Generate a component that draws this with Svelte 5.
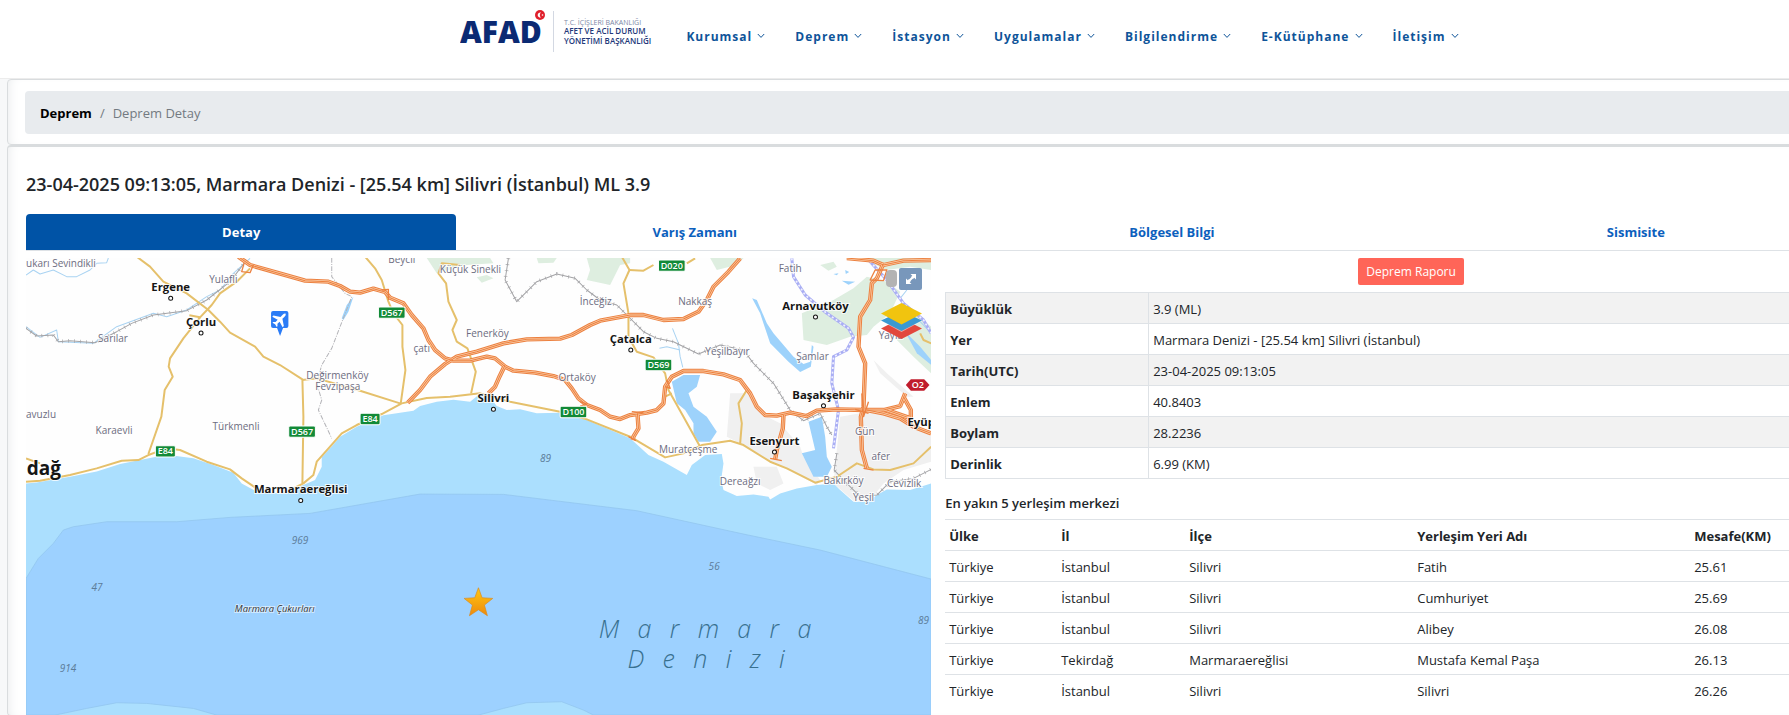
<script lang="ts">
  const menu = [
    'Kurumsal',
    'Deprem',
    'İstasyon',
    'Uygulamalar',
    'Bilgilendirme',
    'E-Kütüphane',
    'İletişim',
  ];

  const tabs = ['Detay', 'Varış Zamanı', 'Bölgesel Bilgi', 'Sismisite'];
  let activeTab = $state('Detay');

  const details = [
    ['Büyüklük', '3.9 (ML)'],
    ['Yer', 'Marmara Denizi - [25.54 km] Silivri (İstanbul)'],
    ['Tarih(UTC)', '23-04-2025 09:13:05'],
    ['Enlem', '40.8403'],
    ['Boylam', '28.2236'],
    ['Derinlik', '6.99 (KM)'],
  ];

  const columns = ['Ülke', 'İl', 'İlçe', 'Yerleşim Yeri Adı', 'Mesafe(KM)'];
  const places = [
    ['Türkiye', 'İstanbul', 'Silivri', 'Fatih', '25.61'],
    ['Türkiye', 'İstanbul', 'Silivri', 'Cumhuriyet', '25.69'],
    ['Türkiye', 'İstanbul', 'Silivri', 'Alibey', '26.08'],
    ['Türkiye', 'Tekirdağ', 'Marmaraereğlisi', 'Mustafa Kemal Paşa', '26.13'],
    ['Türkiye', 'İstanbul', 'Silivri', 'Silivri', '26.26'],
  ];

  // Map data: three map units to one pixel
  const motorways = [
    'M655 20L690 45L770 68L855 92L925 95L960 108L990 125L1020 128L1060 116L1095 126L1110 143L1150 160L1175 195L1210 235L1225 270L1245 300L1275 325L1300 332L1350 332L1400 320L1425 325L1455 350L1480 362L1545 368L1600 378L1635 390L1655 415L1675 445L1700 465L1740 480L1770 500L1800 507L1830 495L1880 488L1910 480L1930 460L1935 410L1955 380L1990 363L2050 363L2110 373L2160 390L2190 430L2210 470L2235 495L2270 497L2310 488L2360 498L2390 482L2450 478L2530 480L2590 480L2640 468L2655 430',
    'M1163 458L1200 420L1230 380L1275 342L1310 320L1370 305L1450 280L1520 268L1620 266L1655 255L1710 225L1740 212L1830 195L1870 195L1930 210L1990 207L2035 185L2060 150L2080 110L2125 65L2160 25',
    'M1455 345L1438 380L1425 410L1405 430',
    'M1852 490L1855 535L1840 560L1838 570',
    'M2290 495L2288 535L2270 600L2265 628',
    'M2480 24L2560 32L2590 45L2650 32L2733 30',
    'M2590 40L2570 85L2555 100L2550 150L2520 200L2515 290L2535 340L2530 470L2522 500L2525 600L2540 655',
    'M2540 480L2590 490L2640 505L2680 530L2733 550',
    'M2650 440L2672 480L2672 505L2600 480',
  ];
  const roads = [
    'M350 20L390 50L430 95L500 130L565 180L600 215L630 248L705 290L730 320L780 345L847 388L850 500L847 700',
    'M690 55L650 95L600 130L575 165L540 202L508 196',
    'M540 202L490 265L450 325L446 350L458 380L434 420L424 500L385 612',
    'M18 695L60 692L150 675L230 655L305 632L355 630L385 615L440 595L480 600L560 635L630 658L665 685L705 712',
    'M18 625L60 640',
    'M820 715L850 700L880 675L890 635L930 590L965 550L1010 525L1085 492L1145 460L1220 444L1290 440L1380 430L1470 455L1620 485L1700 508L1830 560L1935 622L1990 610L2045 585L2130 572L2170 585L2250 635L2300 655L2385 698L2450 680L2510 640L2560 658L2610 660L2680 640L2733 590',
    'M847 390L890 385L1020 422L1140 460',
    'M1035 20L1065 55L1085 90L1105 155L1120 190L1147 225L1147 290L1156 360L1142 460',
    'M1320 45L1265 40L1255 70L1278 100L1285 155L1310 210L1297 240L1310 275L1342 295L1367 365L1353 430',
    'M1805 20L1828 60L1810 100L1825 190L1825 260L1850 305L1900 322L1935 370L1945 420L1990 500L2040 590',
    'M1828 60L1870 62L1900 45M2000 40L2025 25',
    'M2180 420L2155 460L2165 520L2160 580',
    'M1935 440L1955 430',
    'M2700 250L2710 270L2733 280',
  ];
  const railways = [
    'M18 235L50 258L100 255L115 275L150 272L225 278L290 245L335 220L400 195L500 182L560 150L630 95L680 30',
    'M1465 25L1455 90L1490 155L1550 95L1610 72L1665 85L1700 120L1740 150L1790 165L1870 245L1910 265L1960 275L2035 312L2100 285L2170 300L2200 340L2260 400L2310 480L2350 512L2400 490L2420 530L2435 555',
    'M2450 610L2442 660L2480 700L2520 740L2570 735L2610 695L2680 685L2733 658',
  ];
  const tracks = [
    'M935 24L935 80L975 130L995 140L960 230L935 295L905 345L890 400L905 450L895 480L935 565',
  ];
  const subways = [
    'M2315 25L2320 80L2355 135L2420 190L2485 235L2500 262L2480 300L2440 320L2435 400L2455 480L2440 595',
    'M2540 24L2600 90L2650 160L2710 210L2733 250',
  ];
  const greens = [
    'M1220 24L1410 24L1420 40L1340 45L1250 70Z',
    'M1370 82L1400 75L1420 85L1385 98Z',
    'M1700 24L1830 24L1830 40L1800 45L1770 105L1700 90L1710 60Z',
    'M1550 24L1610 24L1600 38L1555 40Z',
    'M2070 24L2170 24L2150 45L2090 60Z',
    'M2350 270L2345 190L2440 150L2500 115L2540 80L2600 95L2640 125L2610 190L2560 230L2540 255L2490 260L2420 285Z',
    'M2640 180L2690 195L2733 230L2733 370L2680 320L2630 270Z',
    'M2520 24L2733 24L2733 60L2670 50L2600 60Z',
    'M2400 45L2440 35L2450 50L2425 62Z',
  ];
  const urban = [
    'M2130 430L2190 430L2230 495L2280 520L2340 590L2350 620L2400 690L2390 705L2290 650L2260 640L2180 590L2120 560Z',
    'M2200 650L2270 650L2290 700L2250 720L2210 700Z',
    'M2560 330L2600 370L2680 440L2660 440L2580 370Z',
    'M2460 500L2520 490L2600 485L2680 520L2733 560L2733 635L2650 660L2590 700L2550 750L2500 752L2440 700L2450 600Z',
  ];
  const lakes = [
    'M2196 145L2210 150L2240 220L2260 250L2290 285L2320 320L2350 342L2370 335L2375 285L2380 290L2372 350L2340 366L2305 335L2250 280L2220 190Z',
    'M1955 395L1990 375L2040 375L2030 410L2005 430L2020 470L2060 500L2090 545L2070 575L2035 575L2020 550L2020 520L1995 480L1970 460Z',
    'M2365 515L2405 500L2415 560L2420 620L2435 650L2420 680L2380 680L2345 610L2385 600Z',
    'M965 205L980 165L1000 140L985 185L970 210Z',
    'M2440 72L2455 70L2450 76ZM2475 60L2487 66L2477 72ZM2465 92L2505 95L2485 104Z',
    'M2655 245L2700 290L2733 330L2733 345L2690 310Z',
  ];
  const streams = [
    'M18 75L40 60L60 72L100 60L140 80L170 80L210 60L230 40L260 38L265 24',
    'M18 230L60 262L110 240L115 275L220 280L290 230L400 190L440 200L500 180L560 140L600 120L640 70L690 25',
    'M1957 235L1975 280L1980 320L1988 352M1918 295L1940 290L1980 300',
    'M2640 145L2660 120M2700 215L2733 250',
  ];

  const villages = [
    [18, 52, 'ukarı Sevindikli', 'start'],
    [610, 100, 'Yulaflı', 'middle'],
    [279, 277, 'Sarılar', 'middle'],
    [18, 505, 'avuzlu', 'start'],
    [282, 552, 'Karaevli', 'middle'],
    [648, 540, 'Türkmenli', 'middle'],
    [952, 386, 'Değirmenköy', 'middle'],
    [953, 420, 'Fevzipaşa', 'middle'],
    [1145, 39, 'Beycil', 'middle'],
    [1351, 70, 'Küçük Sinekli', 'middle'],
    [1205, 306, 'çatı', 'middle'],
    [1402, 262, 'Fenerköy', 'middle'],
    [1671, 392, 'Ortaköy', 'middle'],
    [1727, 166, 'İnceğiz', 'middle'],
    [2025, 166, 'Nakkaş', 'middle'],
    [2310, 67, 'Fatih', 'middle'],
    [2122, 315, 'Yeşilbayır', 'middle'],
    [2377, 331, 'Şamlar', 'middle'],
    [2004, 610, 'Muratçeşme', 'middle'],
    [2160, 706, 'Dereağzı', 'middle'],
    [2534, 554, 'Gün', 'middle'],
    [2582, 630, 'afer', 'middle'],
    [2612, 268, 'Yayla', 'middle'],
    [2470, 702, 'Bakırköy', 'middle'],
    [2530, 752, 'Yeşil', 'middle'],
    [2652, 710, 'Cevizlik', 'middle'],
  ];
  const towns = [
    [452, 122, 'Ergene', 145],
    [543, 227, 'Çorlu', 249],
    [842, 728, 'Marmaraereğlisi', 751],
    [1420, 457, 'Silivri', 478],
    [1832, 279, 'Çatalca', 300],
    [2386, 179, 'Arnavutköy', 201],
    [2410, 446, 'Başakşehir', 467],
    [2263, 584, 'Esenyurt', 606],
  ];
  const depths = [
    [1576, 635, '89'],
    [840, 881, '969'],
    [231, 1022, '47'],
    [144, 1266, '914'],
    [2082, 960, '56'],
    [2710, 1121, '89'],
  ];
  const shields = [
    [436, 604, 'E84'],
    [846, 545, 'D567'],
    [1050, 507, 'E84'],
    [1115, 188, 'D567'],
    [1660, 486, 'D100'],
    [1955, 47, 'D020'],
    [1915, 345, 'D569'],
  ];
</script>

<div class="page">
  <header>
    <a class="logo" href="#anasayfa" aria-label="AFAD">
      <svg width="192" height="48" viewBox="0 0 192 48">
        <text class="mark" x="0" y="37">AFAD</text>
        <circle cx="80" cy="9" r="5" fill="#e0202c" />
        <path d="M81 6.500A2.600 2.600 0 1 0 81 11.500A3.200 3.200 0 0 1 81 6.500Z" fill="#fff" />
        <circle cx="82.500" cy="9" r="0.800" fill="#fff" />
        <path d="M93.500 5V46" stroke="#d3d8e2" />
        <text class="ministry" x="104" y="19">T.C. İÇİŞLERİ BAKANLIĞI</text>
        <text class="agency" x="104" y="28">AFET VE ACİL DURUM</text>
        <text class="agency" x="104" y="38">YÖNETİMİ BAŞKANLIĞI</text>
      </svg>
    </a>
    <nav>
      {#each menu as item}
        <a href="#menu">
          {item}
          <svg width="8" height="6" viewBox="0 0 8 6">
            <path d="M0.800 1L4 4.400L7.200 1" fill="none" stroke="currentColor" />
          </svg>
        </a>
      {/each}
    </nav>
  </header>

  <main>
    <section class="card crumbs">
      <ol>
        <li><a href="#deprem">Deprem</a></li>
        <li>Deprem Detay</li>
      </ol>
    </section>

    <section class="card event">
      <h1>23-04-2025 09:13:05, Marmara Denizi - [25.54 km] Silivri (İstanbul) ML 3.9</h1>

      <div class="tabs" role="tablist">
        {#each tabs as tab}
          <button
            role="tab"
            aria-selected={activeTab === tab}
            class:active={activeTab === tab}
            onclick={() => (activeTab = tab)}>{tab}</button
          >
        {/each}
      </div>

      <div class="content">
        <div class="map">
          <svg class="tiles" viewBox="18 24 2715 1371">
            <defs>
              <linearGradient id="gold" x1="0" y1="0" x2="0" y2="1">
                <stop offset="0" stop-color="#ffc812" />
                <stop offset="1" stop-color="#ee8a0c" />
              </linearGradient>
            </defs>
            <rect x="18" y="24" width="2715" height="1371" fill="#fefefe" />
            {#each greens as d}<path {d} fill="#deeee0" />{/each}
            {#each urban as d}<path {d} fill="#f0f0f0" />{/each}
            <path
              class="shallow"
              d="M18 700L50 697L150 680L230 664L300 642L390 624L440 614L520 625L580 645L640 668L665 700L705 722L780 730L800 728L850 705L885 690L905 650L905 622L930 595L960 560L1010 530L1090 496L1180 482L1200 468L1250 455L1300 449L1350 455L1375 435L1410 442L1430 468L1460 480L1500 478L1550 490L1620 488L1700 510L1830 565L1885 615L1930 635L2000 675L2015 645L2055 615L2105 612L2110 640L2103 690L2110 720L2150 738L2200 733L2245 740L2250 748L2280 730L2330 715L2390 705L2440 700L2460 720L2500 755L2545 755L2570 735L2600 718L2670 720L2733 700V1395H18Z"
            />
            <path
              class="deep"
              d="M18 985L55 925L100 880L130 840L160 830L260 815L470 815L630 802L870 790L1200 732L1450 733L1850 782L2170 852L2400 900L2733 987V1395H1720L1690 1380L1625 1355L1520 1358L1450 1375L1375 1395H590L520 1375L380 1360L290 1358L200 1375L105 1395H18Z"
            />
            {#each lakes as d}<path {d} fill="#9dd2fb" />{/each}
            {#each streams as d}<path {d} class="stream" />{/each}
            {#each tracks as d}<path {d} class="track" />{/each}
            {#each railways as d}
              <path {d} class="rail" />
              <path {d} class="sleepers" />
            {/each}
            {#each subways as d}
              <path {d} class="subway" />
              <path {d} class="dashes" />
            {/each}
            {#each roads as d}<path {d} class="road" />{/each}
            {#each motorways as d}<path {d} class="motorway" />{/each}
            {#each motorways as d}<path {d} class="lane" />{/each}
            {#each motorways as d}<path {d} class="divider" />{/each}
            <path
              class="ramp"
              d="M672 40L665 65L690 68L700 45M1085 120L1105 118L1105 150M1680 455L1700 462L1680 468M1835 485L1870 488M1825 560L1848 572M2250 625L2285 632M2550 90L2590 92L2600 60L2565 60ZM2505 478L2545 490M2530 655L2560 660M2525 430L2530 500L2545 455M1935 410L1950 415L1940 390"
            />

            {#each villages as [x, y, name, anchor]}
              <text class="village" {x} {y} text-anchor={anchor as 'start' | 'middle'}>{name}</text>
            {/each}
            <text class="city" x="20" y="674">dağ</text>
            <text class="town" x="2662" y="528">Eyüp</text>
            {#each towns as [x, y, name, dot]}
              <text class="town" {x} {y} text-anchor="middle">{name}</text>
              <circle cx={x} cy={dot} r="6" fill="#fff" stroke="#111" stroke-width="3" />
            {/each}
            {#each depths as [x, y, value]}
              <text class="depth" {x} {y} text-anchor="middle">{value}</text>
            {/each}
            <text class="trench" x="764" y="1086" text-anchor="middle">Marmara Çukurları</text>
            <text class="sea" x="1736" y="1164">Marmara</text>
            <text class="sea" x="1822" y="1254">Denizi</text>

            {#each shields as [x, y, code]}
              {@const half = String(code).length * 10}
              <rect
                x={Number(x) - half}
                y={Number(y) - 17}
                width={half * 2}
                height="34"
                rx="4"
                fill="#128a37"
                stroke="#fff"
                stroke-width="3"
              />
              <text class="code" {x} y={Number(y) + 9} text-anchor="middle">{code}</text>
            {/each}
            <path d="M2672 388H2712L2728 405L2712 422H2672L2657 405Z" fill="#c01c2c" />
            <text class="code" x="2693" y="414" text-anchor="middle">O2</text>

            <path
              d="M759 183H799Q805 183 805 189V228Q805 234 799 234H789L780 258L771 234H759Q753 234 753 228V189Q753 183 759 183Z"
              fill="#2b7cf6"
            />
            <g transform="translate(780 208) rotate(45)">
              <path
                d="M0 -24Q4 -22 4 -15V-6L22 6V11L4 6V15L9 20V23L0 21L-9 23V20L-4 15V6L-22 11V6L-4 -6V-15Q-4 -22 0 -24Z"
                fill="#fff"
              />
            </g>
            <path
              d="M1375 1013L1386 1043L1418 1045L1393 1065L1402 1097L1375 1079L1348 1097L1357 1065L1332 1045L1364 1043Z"
              fill="url(#gold)"
              stroke="#d98a20"
              stroke-width="2"
            />
          </svg>
          <div class="tools">
            <span class="handle"></span>
            <button class="expand" aria-label="Tam ekran">
              <svg width="12" height="12" viewBox="0 0 12 12">
                <path
                  d="M5.500 1H11V6.500L9.200 4.700L8 5.900L6.100 4L7.300 2.800ZM6.500 11H1V5.500L2.800 7.300L4 6.100L5.900 8L4.700 9.200Z"
                  fill="#fff"
                />
                <path d="M4.500 7.500L7.500 4.500" stroke="#fff" stroke-width="2" />
              </svg>
            </button>
            <button class="layers" aria-label="Katmanlar">
              <svg width="41" height="37" viewBox="0 0 41 37">
                <path d="M20.500 15L41 25.500L20.500 36L0 25.500Z" fill="#e2483d" />
                <path d="M20.500 8L41 18L20.500 29L0 18Z" fill="#fff" opacity="0.500" />
                <path d="M20.500 8L41 17.500L20.500 28L0 17.500Z" fill="#3a99d2" />
                <path d="M20.500 0L41 10.500L20.500 21.500L0 10.500Z" fill="#f1c40f" />
              </svg>
            </button>
          </div>
        </div>

        <div class="info">
          <button class="report">Deprem Raporu</button>

          <table class="details">
            <tbody>
              {#each details as [label, value]}
                <tr>
                  <th scope="row">{label}</th>
                  <td>{value}</td>
                </tr>
              {/each}
            </tbody>
          </table>

          <h2>En yakın 5 yerleşim merkezi</h2>
          <table class="places">
            <thead>
              <tr>
                {#each columns as column}
                  <th>{column}</th>
                {/each}
              </tr>
            </thead>
            <tbody>
              {#each places as place}
                <tr>
                  {#each place as cell}
                    <td>{cell}</td>
                  {/each}
                </tr>
              {/each}
            </tbody>
          </table>
        </div>
      </div>
    </section>
  </main>
</div>

<style>
  :global(body) {
    background: #fff;
    overflow: hidden;
    font-family: 'Open Sans', 'Noto Sans', sans-serif;
    font-size: 13px;
    line-height: 20px;
    color: #212529;
  }
  a {
    text-decoration: none;
  }
  button {
    border: 0;
    padding: 0;
    font: inherit;
    cursor: pointer;
  }
  /* the layout is a little wider than the window and runs off its right side */
  .page {
    width: calc(100% + 114px);
  }
  header {
    display: flex;
    justify-content: center;
    gap: 34px;
    height: 78px;
    padding-left: 16px;
    box-sizing: border-box;
  }
  .logo {
    margin-top: 6px;
  }
  .mark {
    font-size: 30px;
    font-weight: 800;
    fill: #0b2a73;
  }
  .ministry {
    font-size: 7px;
    fill: #7d88a6;
  }
  .agency {
    font-size: 8px;
    font-weight: 600;
    fill: #23397a;
  }
  nav {
    display: flex;
    gap: 30px;
    margin-top: 27px;
  }
  nav a {
    color: #0e5499;
    font-size: 12px;
    font-weight: 700;
    letter-spacing: 1px;
    white-space: nowrap;
  }
  nav svg {
    margin-left: 1px;
    vertical-align: 2px;
  }
  main {
    padding: 0 7px;
    background: #f7f8f9;
    border-top: 1px solid #ececec;
  }
  .card {
    background: #fff;
    border: 1px solid #d9dcde;
    border-radius: 4px;
    box-shadow: inset 8px 0 12px -8px #e6e8ea;
    padding: 0 18px;
  }
  .crumbs {
    padding: 11px 17px 10px;
  }
  ol {
    display: flex;
    margin: 0;
    padding: 13px 15px 11px;
    list-style: none;
    background: #e8ebee;
    border-radius: 4px;
    line-height: 19px;
  }
  li {
    color: #737a81;
  }
  li + li::before {
    content: '/';
    padding: 0 8px;
  }
  li a {
    color: #000;
    font-weight: 700;
  }
  .event {
    border-top-width: 2px;
  }
  h1 {
    margin: 0;
    padding: 25px 0 18px;
    font-size: 18px;
    line-height: 24px;
    font-weight: 600;
  }
  .tabs {
    display: flex;
    padding-right: 16px;
    border-bottom: 1px solid #dee2e6;
  }
  .tabs button {
    flex: 1 1 auto;
    height: 36px;
    background: none;
    border-radius: 4px 4px 0 0;
    color: #0c60bd;
    font-weight: 700;
  }
  .tabs .active {
    background: #0053a6;
    color: #fff;
  }
  .content {
    display: grid;
    grid-template-columns: 34fr 35fr;
    gap: 14px;
    margin-top: 7px;
  }
  .map {
    position: relative;
  }
  .tiles {
    display: block;
    width: 100%;
    overflow: hidden;
  }
  .tiles path {
    stroke-linejoin: round;
  }
  .shallow {
    fill: #abdffe;
  }
  .deep {
    fill: #9dd1ff;
    stroke: #8fc3ec;
    stroke-width: 2;
  }
  .stream,
  .track,
  .rail,
  .sleepers,
  .subway,
  .dashes,
  .road,
  .motorway,
  .lane,
  .divider,
  .ramp {
    fill: none;
  }
  .stream {
    stroke: #a9d3f2;
    stroke-width: 3;
  }
  .track {
    stroke: #b4b4b8;
    stroke-width: 3;
    stroke-dasharray: 14 4 3 4;
  }
  .rail {
    stroke: #a3a3a6;
    stroke-width: 3;
  }
  .sleepers {
    stroke: #a3a3a6;
    stroke-width: 11;
    stroke-dasharray: 2 16;
  }
  .subway {
    stroke: #a9aef4;
    stroke-width: 9;
  }
  .dashes {
    stroke: #f0f0ff;
    stroke-width: 5;
    stroke-dasharray: 6 8;
  }
  .road {
    stroke: #e5c06b;
    stroke-width: 6;
  }
  .motorway {
    stroke: #ec8140;
    stroke-width: 13;
  }
  .lane {
    stroke: #fbd0ac;
    stroke-width: 7;
  }
  .divider {
    stroke: #ec8140;
    stroke-width: 3;
  }
  .ramp {
    stroke: #ec8140;
    stroke-width: 4;
  }
  .village,
  .town,
  .city,
  .trench {
    paint-order: stroke;
    stroke: #fff;
    stroke-width: 6px;
    stroke-opacity: 0.8;
  }
  .village {
    font-size: 30px;
    fill: #6c6c80;
  }
  .town {
    font-size: 34px;
    font-weight: 700;
    fill: #151515;
  }
  .city {
    font-size: 57px;
    font-weight: 700;
    fill: #151515;
  }
  .depth {
    font-size: 30px;
    font-style: italic;
    fill: #5c7c99;
  }
  .trench {
    font-size: 28px;
    font-style: italic;
    fill: #333;
    stroke-opacity: 0.5;
  }
  .sea {
    font-size: 75px;
    font-weight: 300;
    font-style: italic;
    letter-spacing: 55px;
    fill: #38708f;
  }
  .code {
    font-size: 27px;
    font-weight: 600;
    fill: #fff;
  }
  .tools {
    position: absolute;
    top: 10px;
    right: 9px;
    display: grid;
    grid-template-columns: 11px 23px;
    justify-content: end;
    gap: 13px 2px;
  }
  .handle {
    height: 17px;
    margin-top: 2px;
    border-radius: 4px;
    background: #b3b3b3;
  }
  .expand {
    height: 22px;
    border-radius: 2px;
    background: #7897bb;
    line-height: 0;
  }
  .layers {
    grid-column: 1 / -1;
    justify-self: end;
    background: none;
    line-height: 0;
  }
  .info {
    display: flex;
    flex-direction: column;
  }
  .report {
    align-self: center;
    height: 27px;
    margin-bottom: 7px;
    padding: 0 8px;
    border-radius: 2px;
    background: #ff6558;
    color: #fff;
    font-size: 12px;
  }
  table {
    width: 100%;
    table-layout: fixed;
    border-collapse: collapse;
  }
  th,
  td {
    padding: 6px 4px 4px;
    text-align: left;
  }
  .details th,
  .details td {
    border: 1px solid #dee2e6;
  }
  .details th {
    width: 194px;
  }
  .details tr:nth-child(odd) {
    background: #f2f2f2;
  }
  h2 {
    margin: 14px 0 6px;
    font-size: 13px;
    line-height: 20px;
    font-weight: 600;
  }
  .places th,
  .places td {
    border-top: 1px solid #dee2e6;
  }
  .places th:nth-child(1) {
    width: 104px;
  }
  .places th:nth-child(2) {
    width: 120px;
  }
  .places th:nth-child(3) {
    width: 220px;
  }
  .places th:nth-child(4) {
    width: 269px;
  }
</style>
